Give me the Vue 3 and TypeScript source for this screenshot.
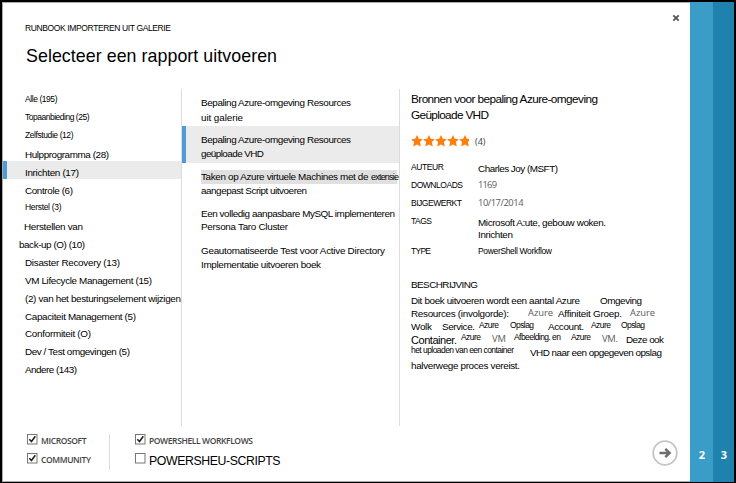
<script setup lang="ts">
import type { Directive } from 'vue'

interface Run {
  text: string
  width: number
  gap?: number
  kind?: string
}

interface Category extends Run {
  selected?: boolean
}

// Tracks a single line of text so that it fills its measure.
const vFit: Directive<HTMLElement, number> = {
  mounted(el, { value }) {
    const range = document.createRange()
    range.selectNodeContents(el)
    const natural = range.getBoundingClientRect().width
    const count = (el.textContent ?? '').length
    if (count > 1) el.style.letterSpacing = `${((value - natural) / (count - 1)).toFixed(3)}px`
    el.style.width = `${value}px`
  },
}

const categories: Category[] = [
  { text: 'Alle (195)', width: 32.5, kind: 'small high' },
  { text: 'Topaanbieding (25)', width: 64.5, kind: 'small high' },
  { text: 'Zelfstudie (12)', width: 48.5, kind: 'small high' },
  { text: 'Hulpprogramma (28)', width: 84 },
  { text: 'Inrichten (17)', width: 54, selected: true },
  { text: 'Controle (6)', width: 48 },
  { text: 'Herstel (3)', width: 36.5, kind: 'small high' },
  { text: 'Herstellen van', width: 59, gap: -1 },
  { text: 'back-up (O) (10)', width: 66, gap: -6 },
  { text: 'Disaster Recovery (13)', width: 95 },
  { text: 'VM Lifecycle Management (15)', width: 127 },
  { text: '(2) van het besturingselement wijzigen', width: 156 },
  { text: 'Capaciteit Management (5)', width: 111 },
  { text: 'Conformiteit (O)', width: 66, kind: 'up' },
  { text: 'Dev / Test omgevingen (5)', width: 105, kind: 'up' },
  { text: 'Andere (143)', width: 52, kind: 'up' },
]

const books: { lines: Run[][]; state?: string }[] = [
  {
    state: 'loose',
    lines: [[{ text: 'Bepaling Azure-omgeving Resources', width: 150 }], [{ text: 'uit galerie', width: 42 }]],
  },
  {
    state: 'selected',
    lines: [[{ text: 'Bepaling Azure-omgeving Resources', width: 150 }], [{ text: 'geüploade VHD', width: 63 }]],
  },
  {
    state: 'marked',
    lines: [
      [
        { text: 'Taken op Azure virtuele Machines met de', width: 167.5 },
        { text: 'extensie', width: 28, gap: 2.5, kind: 'tight' },
      ],
      [{ text: 'aangepast Script uitvoeren', width: 106 }],
    ],
  },
  {
    state: 'dense',
    lines: [
      [{ text: 'Een volledig aanpasbare MySQL implementeren', width: 194 }],
      [{ text: 'Persona Taro Cluster', width: 87 }],
    ],
  },
  {
    lines: [
      [{ text: 'Geautomatiseerde Test voor Active Directory', width: 184 }],
      [{ text: 'Implementatie uitvoeren boek', width: 120 }],
    ],
  },
]

const facts: { label: string; width: number; state?: string; values: Run[] }[] = [
  { label: 'AUTEUR', width: 33, state: 'low', values: [{ text: 'Charles Joy (MSFT)', width: 80 }] },
  { label: 'DOWNLOADS', width: 52, values: [{ text: '1169', width: 19, kind: 'soft' }] },
  { label: 'BIJGEWERKT', width: 51, values: [{ text: '10/17/2014', width: 45.5, kind: 'soft' }] },
  {
    label: 'TAGS',
    width: 21,
    state: 'low tall',
    values: [
      { text: 'Microsoft A:ute, gebouw woken.', width: 128 },
      { text: 'Inrichten', width: 35 },
    ],
  },
  { label: 'TYPE', width: 20, values: [{ text: 'PowerShell Workflow', width: 74, kind: 'small' }] },
]

const description: Run[][] = [
  [
    { text: 'Dit boek uitvoeren wordt een aantal Azure', width: 169 },
    { text: 'Omgeving', width: 42, gap: 20 },
  ],
  [
    { text: 'Resources (involgorde):', width: 98 },
    { text: 'Azure', width: 25, gap: 19, kind: 'soft up' },
    { text: 'Affiniteit Groep.', width: 64, gap: 5 },
    { text: 'Azure', width: 25, gap: 8, kind: 'soft up' },
  ],
  [
    { text: 'Wolk', width: 21 },
    { text: 'Service.', width: 33, gap: 10 },
    { text: 'Azure', width: 20, gap: 4, kind: 'small high' },
    { text: 'Opslag', width: 24, gap: 11, kind: 'small high' },
    { text: 'Account.', width: 36, gap: 14 },
    { text: 'Azure', width: 20, gap: 7, kind: 'small high' },
    { text: 'Opslag', width: 24, gap: 10, kind: 'small high' },
  ],
  [
    { text: 'Container.', width: 46, kind: 'large' },
    { text: 'Azure', width: 20, gap: 4, kind: 'small higher' },
    { text: 'VM', width: 14, gap: 11, kind: 'soft up' },
    { text: 'Afbeelding. en', width: 47, gap: 8, kind: 'small higher' },
    { text: 'Azure', width: 20, gap: 10, kind: 'small higher' },
    { text: 'VM.', width: 16, gap: 11, kind: 'soft up' },
    { text: 'Deze ook', width: 38, gap: 8 },
  ],
  [
    { text: 'het uploaden van een container', width: 103, kind: 'small higher' },
    { text: 'VHD naar een opgegeven opslag', width: 132, gap: 16 },
  ],
  [{ text: 'halverwege proces vereist.', width: 109 }],
]

const filters: { text: string; width: number; checked: boolean; kind: string }[][] = [
  [
    { text: 'MICROSOFT', width: 45.5, checked: true, kind: 'caps' },
    { text: 'COMMUNITY', width: 50, checked: true, kind: 'caps' },
  ],
  [
    { text: 'POWERSHELL WORKFLOWS', width: 104, checked: true, kind: 'caps' },
    { text: 'POWERSHEU-SCRIPTS', width: 131.5, checked: false, kind: 'big' },
  ],
]
</script>

<template>
  <div class="window">
    <main class="dialog">
      <header class="head">
        <div class="titles">
          <div class="crumb"><span v-fit="146" class="run">RUNBOOK IMPORTEREN UIT GALERIE</span></div>
          <h1><span v-fit="251" class="run">Selecteer een rapport uitvoeren</span></h1>
        </div>
        <svg class="close" viewBox="0 0 8 8"><path d="M1.3 1.3 6.7 6.7M6.7 1.3 1.3 6.7" /></svg>
      </header>

      <div class="columns">
        <nav class="categories">
          <div v-for="c in categories" :key="c.text" class="category" :class="{ selected: c.selected }">
            <span v-fit="c.width" class="run" :class="c.kind" :style="{ marginLeft: (c.gap ?? 0) + 'px' }">{{ c.text }}</span>
          </div>
        </nav>

        <section class="books">
          <div v-for="(b, i) in books" :key="i" class="book" :class="b.state">
            <div v-for="(l, j) in b.lines" :key="j" class="line">
              <span v-for="r in l" :key="r.text" v-fit="r.width" class="run" :class="r.kind" :style="{ marginLeft: (r.gap ?? 0) + 'px' }">{{ r.text }}</span>
            </div>
          </div>
        </section>

        <article class="detail">
          <h2>
            <span v-fit="187" class="run">Bronnen voor bepaling Azure-omgeving</span>
            <span v-fit="78" class="run">Geüploade VHD</span>
          </h2>
          <div class="rating">
            <svg viewBox="0 0 58 12">
              <path
                v-for="n in 5"
                :key="n"
                :transform="`translate(${(n - 1) * 12} 0)`"
                d="M6 0 7.8 3.8 11.8 4.2 8.9 7.1 9.8 11.5 6 9.4 2.2 11.5 3.1 7.1 .2 4.2 4.2 3.8Z"
              />
            </svg>
            <span v-fit="10.5" class="run">(4)</span>
          </div>
          <dl>
            <div v-for="f in facts" :key="f.label" class="fact" :class="f.state">
              <dt><span v-fit="f.width" class="run">{{ f.label }}</span></dt>
              <dd>
                <span v-for="v in f.values" :key="v.text" v-fit="v.width" class="run" :class="v.kind">{{ v.text }}</span>
              </dd>
            </div>
          </dl>
          <h3><span v-fit="67" class="run">BESCHRIJVING</span></h3>
          <div v-for="(l, i) in description" :key="i" class="text">
            <span v-for="(r, j) in l" :key="j" v-fit="r.width" class="run" :class="r.kind" :style="{ marginLeft: (r.gap ?? 0) + 'px' }">{{ r.text }}</span>
          </div>
        </article>
      </div>

      <footer class="foot">
        <div v-for="(group, i) in filters" :key="i" class="group">
          <label v-for="f in group" :key="f.text" class="filter">
            <svg class="box" viewBox="0 0 11 11">
              <rect x=".5" y=".5" width="9.5" height="9.5" />
              <path v-if="f.checked" d="M2.3 5.2 4.5 7.5 8.3 2.3" />
            </svg>
            <span v-fit="f.width" class="run" :class="f.kind">{{ f.text }}</span>
          </label>
        </div>
        <svg class="next" viewBox="0 0 26 26">
          <circle cx="13" cy="13" r="11.8" />
          <path d="M7.5 13H17.5M13.3 8.9 17.6 13 13.3 17.1" />
        </svg>
      </footer>
    </main>
    <aside class="step two">2</aside>
    <aside class="step three">3</aside>
  </div>
</template>

<style>
body {
  margin: 0;
  background: #000;
}
</style>

<style scoped>
.window {
  box-sizing: border-box;
  width: 736px;
  height: 483px;
  display: flex;
  border: solid #000;
  border-width: 2px 2px 1px 2px;
  background: #fff;
  color: #000;
  font: 9.9px/14px 'Liberation Sans', Arial, sans-serif;
  overflow: hidden;
}
.dialog {
  box-sizing: border-box;
  width: 688px;
  flex: none;
  display: flex;
  flex-direction: column;
  border: solid #a9a9a9;
  border-width: 1px 0 1px 1px;
}
.run {
  display: block;
  flex: none;
  white-space: pre;
}
.small { font-size: 8.5px; }
.tight { font-size: 9px; }
.large { font-size: 11px; }
.soft {
  color: #5c5c5c;
  font-family: 'Open Sans', sans-serif;
  font-size: 9.4px;
}
.up { margin-top: -1px; }
.high { margin-top: -2px; }
.higher { margin-top: -3px; }

.head {
  height: 86px;
  display: flex;
  justify-content: space-between;
}
.titles { padding: 18px 0 0 22px; }
.crumb {
  font-size: 8.5px;
  line-height: 14px;
}
h1 {
  margin: 10px 0 0 1px;
  font-size: 17.8px;
  line-height: 22px;
  font-weight: 400;
}
.close {
  width: 8px;
  height: 8px;
  margin: 11px 10px 0 0;
}
.close path {
  stroke: #555;
  stroke-width: 1.8;
}

.columns {
  height: 337px;
  display: flex;
}
.categories {
  width: 178px;
  border-right: 1px solid #dcdcdc;
}
.category {
  box-sizing: border-box;
  display: flex;
  align-items: flex-start;
  height: 18px;
  padding: 5px 0 0 22px;
}
.category.selected {
  padding-left: 18px;
  border-left: 4px solid #4e9bd6;
  background: #ebebeb;
}
.books {
  width: 217px;
  border-right: 1px solid #dcdcdc;
}
.book {
  box-sizing: border-box;
  height: 37px;
  padding: 7px 0 0 19px;
}
.line {
  display: flex;
  height: 14px;
}
.book.loose .line { height: 15px; }
.book.dense .line { height: 13px; }
.book.selected {
  padding-left: 15px;
  border-left: 4px solid #4e9bd6;
  background: #ebebeb;
}
.book.marked .line:first-child {
  width: 196px;
  background: #e0e0e0;
}

.detail { padding-left: 11px; }
h2 {
  margin: 2px 0 0;
  font-size: 11.8px;
  line-height: 16px;
  font-weight: 400;
}
.rating {
  display: flex;
  height: 13px;
  margin-top: 12px;
  gap: 6px;
  color: #444;
  font: 9px/14px 'Open Sans', sans-serif;
}
.rating svg {
  width: 58px;
  height: 12px;
}
.rating path { fill: #ff7f0e; }
dl { margin: 12px 0 0; }
.fact {
  display: flex;
  height: 18px;
}
.fact.tall { height: 30px; }
dt {
  width: 67px;
  font-size: 8.5px;
}
dd {
  margin: 0;
  line-height: 12px;
}
dd .soft,
dd .small { line-height: 14px; }
.low dd { margin-top: 3px; }
h3 {
  margin: 16px 0 2px;
  font-size: 9.9px;
  line-height: 14px;
  font-weight: 400;
}
.text {
  display: flex;
  height: 13px;
}

.foot {
  display: flex;
  flex: 1;
  padding: 8px 12px 0 24px;
}
.group {
  width: 82px;
  height: 36px;
  margin-right: 25px;
  border-right: 1px solid #dcdcdc;
}
.group + .group {
  width: 160px;
  border: 0;
}
.filter {
  display: flex;
  height: 19px;
  gap: 3px;
}
.box {
  width: 11px;
  height: 11px;
  flex: none;
}
.box rect {
  fill: #fff;
  stroke: #777;
}
.box path {
  fill: none;
  stroke: #222;
  stroke-width: 1.6;
}
.caps {
  color: #444;
  font: 600 8.5px/13px 'Open Sans', sans-serif;
}
.big {
  font-size: 12.3px;
  line-height: 17px;
}
.next {
  width: 26px;
  height: 26px;
  margin: 6px 0 0 auto;
}
.next circle {
  fill: none;
  stroke: #c6c6c6;
  stroke-width: 1.8;
}
.next path {
  fill: none;
  stroke: #6e6e6e;
  stroke-width: 2.5;
}

.step {
  box-sizing: border-box;
  display: flex;
  flex: none;
  align-items: flex-end;
  justify-content: center;
  padding: 0 0 19px 1px;
  color: #fff;
  font: 700 11px/16px 'Open Sans', sans-serif;
}
.two {
  width: 23px;
  background: #3a9dc8;
}
.three {
  width: 21px;
  background: #1f82ae;
}
</style>
